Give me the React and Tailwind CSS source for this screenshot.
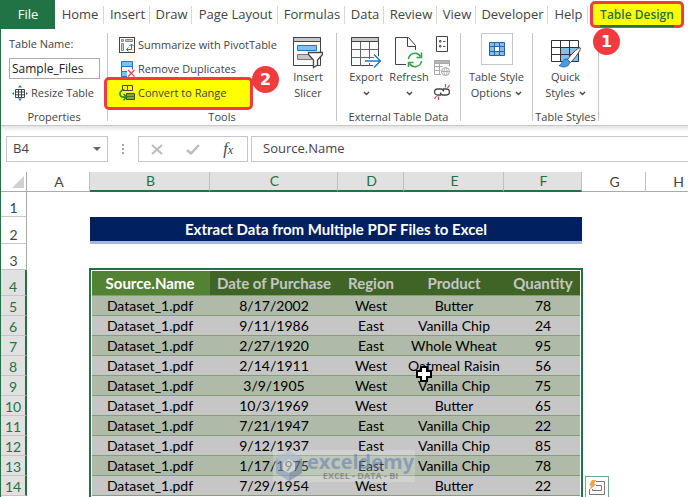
import React, { useState } from 'react';

const tabs = [
    { name: 'Home', width: 'w-[49px]' },
    { name: 'Insert', width: 'w-[46px]' },
    { name: 'Draw', width: 'w-[42px]' },
    { name: 'Page Layout', width: 'w-[86px]' },
    { name: 'Formulas', width: 'w-[67px]' },
    { name: 'Data', width: 'w-[39px]' },
    { name: 'Review', width: 'w-[53px]' },
    { name: 'View', width: 'w-[39px]' },
    { name: 'Developer', width: 'w-[72px]' },
    { name: 'Help', width: 'w-[40px]' },
];

const columns = [
    { name: 'A', width: 'w-[63px]' },
    { name: 'B', width: 'w-[120px]', selected: true },
    { name: 'C', width: 'w-[128px]', selected: true },
    { name: 'D', width: 'w-[66px]', selected: true },
    { name: 'E', width: 'w-[100px]', selected: true },
    { name: 'F', width: 'w-[78px]', selected: true },
    { name: 'G', width: 'w-[64px]' },
    { name: 'H', width: 'w-[64px]' },
];

const headers = ['Source.Name', 'Date of Purchase', 'Region', 'Product', 'Quantity'];

const rows = [
    ['Dataset_1.pdf', '8/17/2002', 'West', 'Butter', 78],
    ['Dataset_1.pdf', '9/11/1986', 'East', 'Vanilla Chip', 24],
    ['Dataset_1.pdf', '2/27/1920', 'East', 'Whole Wheat', 95],
    ['Dataset_1.pdf', '2/14/1911', 'West', 'Oatmeal Raisin', 56],
    ['Dataset_1.pdf', '3/9/1905', 'West', 'Vanilla Chip', 75],
    ['Dataset_1.pdf', '10/3/1969', 'West', 'Butter', 65],
    ['Dataset_1.pdf', '7/21/1947', 'East', 'Vanilla Chip', 22],
    ['Dataset_1.pdf', '9/12/1937', 'East', 'Vanilla Chip', 85],
    ['Dataset_1.pdf', '1/17/1975', 'East', 'Vanilla Chip', 78],
    ['Dataset_1.pdf', '7/29/1954', 'West', 'Butter', 22],
];

const Chevron = ({ className = '' }) => (
    <svg width="7" height="5" viewBox="0 0 7 5" className={className} fill="none" stroke="#444" strokeWidth="1.4">
        <path d="M1 1l2.5 2.5L6 1" />
    </svg>
);

const PivotIcon = () => (
    <svg width="16" height="16" viewBox="0 0 16 16" fill="none">
        <rect x="0.5" y="0.5" width="15" height="15" fill="#fff" stroke="#444" />
        <path d="M2.5 2.5h2v2h-2zM6.5 2.5h7v2h-7zM2.5 6.5h2v7h-2z" fill="#c8c8c8" stroke="#888" />
        <path d="M7.5 12.5h5V7M9.5 10.5l-2 2 2 2M10.500 9l2-2 2 2" stroke="#1979ca" />
    </svg>
);

const DuplicatesIcon = () => (
    <svg width="16" height="16" viewBox="0 0 16 16" fill="none">
        <path d="M2.500.5h11v5h-11z" fill="#83beec" stroke="#1979ca" />
        <path d="M2.500 5.500v5M13.500 5.500v3" stroke="#555" />
        <path d="M8 15.500H2.500v-5H8" fill="#83beec" stroke="#1979ca" />
        <path d="M9 9l6.500 6.500M15.500 9L9 15.500" stroke="#e04343" strokeWidth="1.200" />
    </svg>
);

const ConvertIcon = () => (
    <svg width="16" height="16" viewBox="0 0 16 16" fill="none">
        <path d="M3.500.5h10v5h-10zM8.500.5v5" stroke="#444" />
        <path d="M7.500 8.500h8v6h-8z" fill="#7fae1c" stroke="#444" />
        <path d="M8 11.500h7.500" stroke="#4d7a12" />
        <path d="M5.500 4.500C1.500 5 .5 8 1.200 10c.6 2 2.500 2.500 5.500 2M4.500 9l3 3-3 3.300" stroke="#2f8a2b" strokeWidth="1.700" />
    </svg>
);

const ResizeIcon = () => (
    <svg width="16" height="16" viewBox="0 0 16 16" fill="none">
        <path d="M3.500 4.500h9v8h-9zM3.500 7h9M3.500 9.800h9M6.500 4.500v8M9.500 4.500v8" stroke="#444" />
        <path d="M8 0l2 2.500H6zM8 16l2-2.500H6zM0 8.500L2 7v3zM16 8.500L14 7v3z" fill="#1979ca" />
    </svg>
);

const SlicerIcon = () => (
    <svg width="30" height="32" viewBox="0 0 30 32" fill="none">
        <path d="M.5.5h27v28H.5z" fill="#fafafa" stroke="#444" />
        <path d="M.5.5h27v4H.5z" fill="#c8c8c8" stroke="#444" />
        <path d="M4.500 8.500h19v5h-19z" fill="#83beec" stroke="#1979ca" />
        <path d="M4.500 17.500h14v5h-14z" fill="#c8c8c8" stroke="#777" />
        <path d="M15.500 15.500h14v2l-5 5.500v5l-4 2.500V23l-5-5.500z" fill="#fff" stroke="#444" strokeWidth="1.300" />
    </svg>
);

const ExportIcon = () => (
    <svg width="30" height="32" viewBox="0 0 30 32" fill="none">
        <path d="M.5.5h27v28H.5z" fill="#fafafa" stroke="#444" />
        <path d="M.5 12.500h27M.5 20.500h27M9.500 4.500v24M18.500 4.500v24" stroke="#666" />
        <path d="M.5.5h27v4H.5z" fill="#c8c8c8" stroke="#444" />
        <path d="M14 24h15M23 17.500l6.500 6.500-6.500 6.500" stroke="#fff" strokeWidth="4" />
        <path d="M14 24h15M23 17.500l6.500 6.500-6.500 6.500" stroke="#1979ca" strokeWidth="1.500" />
    </svg>
);

const RefreshIcon = () => (
    <svg width="30" height="32" viewBox="0 0 30 32" fill="none">
        <path d="M12 27.500H1.500V.5h13l7 8V13" fill="#fafafa" stroke="#444" />
        <path d="M13.500.5v9h8" stroke="#444" />
        <path d="M14.500 22a6.500 6.500 0 0 1 12-2.500M27.500 24a6.500 6.500 0 0 1-12 2.500" stroke="#33a04a" strokeWidth="1.500" />
        <path d="M27.500 15.500v5h-5M14.500 30v-4.500h5" stroke="#33a04a" strokeWidth="1.500" />
    </svg>
);

const PropertiesIcon = () => (
    <svg width="16" height="16" viewBox="0 0 16 16" fill="none">
        <path d="M2.500.5h11v15h-11z" fill="#fff" stroke="#444" />
        <path d="M5.500 4.500h1.500v1.500h-1.500zM5.500 9.500h1.500v1.500h-1.500zM9 5.500h2.500M9 10.500h2.500" stroke="#555" />
    </svg>
);

const BrowserIcon = () => (
    <svg width="16" height="16" viewBox="0 0 16 16" fill="none" stroke="#a9a9a9">
        <path d="M7 14.500H.5V.5h15v6M.5 6.500h8M.5 10.500h6M5.500 3.500v11" />
        <path d="M.5.5h15v3H.5z" fill="#b5b5b5" />
        <circle cx="11.500" cy="11.500" r="4" fill="#fff" />
        <path d="M7.500 11.500h8M11.500 7.500c-2 2.500-2 5.500 0 8c2-2.500 2-5.500 0-8z" />
    </svg>
);

const UnlinkIcon = () => (
    <svg width="16" height="16" viewBox="0 0 16 16" fill="none">
        <path d="M7 11H3.500a3 3 0 0 1 0-6H7a2.500 2.500 0 0 1 2.500 2.500M9 5h3.500a3 3 0 0 1 0 6H9a2.500 2.500 0 0 1-2.500-2.500" stroke="#444" strokeWidth="1.300" />
        <path d="M11.500 3.500V0M13.500 4l2-3M4.500 12.500V16M2.500 12l-2 3" stroke="#e04343" strokeWidth="1.200" />
    </svg>
);

const StyleOptionsIcon = () => (
    <svg width="16" height="14" viewBox="0 0 16 14" fill="none">
        <path d="M.5.5h15v13H.5z" fill="#83beec" />
        <path d="M5.500 4.500h5v5h-5z" fill="#fff" />
        <path d="M.5.5h15v13H.5zM.5 4.500h15M.5 9.500h15M5.500.5v13M10.500.5v13" stroke="#2b6494" />
    </svg>
);

const QuickStylesIcon = () => (
    <svg width="30" height="32" viewBox="0 0 30 32" fill="none">
        <path d="M.5 3.500h27v21H.5z" fill="#fff" />
        <path d="M9.500 10.500h18v14h-18z" fill="#83beec" />
        <path d="M.5 3.500h27v21H.5zM.5 10.500h27M.5 17.500h27M9.500 3.500v21M18.500 3.500v21" stroke="#333" />
        <path d="M29 10.500c-3 1-9 7-12.500 12l3 3C24 21 29.500 14 29.500 11z" fill="#fff" stroke="#444" />
        <path d="M8 28.500c3-.5 2.500-5.500 7-6.500 3 .5 4.500 3 3 5.500-2.500 3-7 3-10 1z" fill="#4a9be0" stroke="#1f6cb0" />
    </svg>
);

const SmallButton = ({ icon, children }) => (
    <button type="button" className="flex h-6 items-center gap-[3px] whitespace-nowrap">
        {icon}
        <span>{children}</span>
    </button>
);

const BigButton = ({ icon, children, className = '' }) => (
    <button type="button" className={`flex flex-col items-center pt-2 leading-4 whitespace-nowrap ${className}`}>
        {icon}
        {children}
    </button>
);

const Group = ({ title, className, children }) => (
    <section className={`flex shrink-0 flex-col justify-between ${className}`}>
        <div className="flex">{children}</div>
        <h2 className="text-center leading-4 whitespace-nowrap">{title}</h2>
    </section>
);

const Divider = () => <div className="my-1 w-px shrink-0 bg-[#c6c6c6]" />;

const Callout = ({ children, className }) => (
    <span className={`absolute z-20 flex size-[27px] items-center justify-center rounded-full bg-[#f23b3f] font-['DejaVu_Sans',sans-serif] text-base font-bold text-white ${className}`}>
        {children}
    </span>
);

const Ribbon = () => {
    const [tableName, setTableName] = useState('Sample_Files');

    return (
        <div className="relative flex h-24 text-[11px]">
            <Group title="Properties" className="w-[106px]">
                <div className="flex flex-col gap-0.5 pt-[3px] pl-2">
                    <label htmlFor="table-name" className="h-6 leading-6">Table Name:</label>
                    <input
                        id="table-name"
                        value={tableName}
                        onChange={(e) => setTableName(e.target.value)}
                        className="h-[21px] w-[91px] border border-[#ababab] bg-white pl-0.5 text-xs text-[#222]"
                    />
                    <div className="pl-[3px]"><SmallButton icon={<ResizeIcon />}>Resize Table</SmallButton></div>
                </div>
            </Group>
            <Divider />
            <Group title="Tools" className="w-[228px]">
                <div className="flex w-[178px] flex-col items-start pt-1 pl-[11px]">
                    <SmallButton icon={<PivotIcon />}>Summarize with PivotTable</SmallButton>
                    <SmallButton icon={<DuplicatesIcon />}>Remove Duplicates</SmallButton>
                    <div className="relative z-10">
                        <span className="absolute -top-1 -left-[15px] h-[33px] w-[149px] rounded-[5px] border-3 border-[#f23b3f] bg-[#ffff00]" />
                        <div className="relative"><SmallButton icon={<ConvertIcon />}>Convert to Range</SmallButton></div>
                        <Callout className="-top-[15px] left-[133px]">2</Callout>
                    </div>
                </div>
                <BigButton icon={<SlicerIcon />} className="w-11">
                    <span>Insert</span>
                    <span>Slicer</span>
                </BigButton>
            </Group>
            <Divider />
            <Group title="External Table Data" className="w-[123px]">
                <BigButton icon={<ExportIcon />} className="w-[58px]">
                    <span>Export</span>
                    <Chevron className="mt-1.5" />
                </BigButton>
                <BigButton icon={<RefreshIcon />} className="w-7">
                    <span>Refresh</span>
                    <Chevron className="mt-1.5" />
                </BigButton>
                <div className="flex flex-col gap-2 pt-[7px] pl-[11px]">
                    <button type="button" aria-label="Properties"><PropertiesIcon /></button>
                    <button type="button" aria-label="Open in Browser"><BrowserIcon /></button>
                    <button type="button" aria-label="Unlink"><UnlinkIcon /></button>
                </div>
            </Group>
            <Divider />
            <div className="w-[71px] shrink-0">
                <button type="button" className="flex w-full flex-col items-center pt-1 leading-4 whitespace-nowrap">
                    <span className="mb-1 flex size-8 items-center justify-center border border-[#c6c6c6]"><StyleOptionsIcon /></span>
                    <span>Table Style</span>
                    <span className="flex items-center gap-1">Options <Chevron /></span>
                </button>
            </div>
            <Divider />
            <Group title="Table Styles" className="w-[65px]">
                <BigButton icon={<QuickStylesIcon />} className="w-full">
                    <span>Quick</span>
                    <span className="flex items-center gap-1">Styles <Chevron /></span>
                </BigButton>
            </Group>
            <Divider />
        </div>
    );
};

const FormulaBar = () => (
    <div className="flex h-[26px] text-[13px]">
        <button type="button" className="ml-[5px] flex w-[102px] items-center justify-between border border-[#c6c6c6] px-1.5">
            B4
            <svg width="8" height="4" viewBox="0 0 8 4"><path d="M0 0h8L4 4z" fill="#666" /></svg>
        </button>
        <div className="flex w-[30px] items-center justify-center">
            <svg width="2" height="10" viewBox="0 0 2 10" fill="#a6a6a6"><path d="M0 0h2v2H0zM0 4h2v2H0zM0 8h2v2H0z" /></svg>
        </div>
        <div className="flex w-[110px] items-center justify-between border border-[#c6c6c6] px-3">
            <button type="button" aria-label="Cancel">
                <svg width="12" height="11" viewBox="0 0 12 11" stroke="#bdbdbd" strokeWidth="2"><path d="M1 1l10 9M11 1L1 10" /></svg>
            </button>
            <button type="button" aria-label="Enter">
                <svg width="14" height="11" viewBox="0 0 14 11" fill="none" stroke="#bdbdbd" strokeWidth="2.500"><path d="M1 6l4 3.500L13 1" /></svg>
            </button>
            <button type="button" className="pr-0.5 font-['Liberation_Serif',serif] text-base text-[#444] italic">
                f<span className="text-xs">x</span>
            </button>
        </div>
        <input
            aria-label="Formula"
            defaultValue="Source.Name"
            className="ml-[3px] min-w-0 flex-1 border border-r-0 border-[#c6c6c6] pl-[11px]"
        />
    </div>
);

const RowNumber = ({ children, selected }) => (
    <th
        scope="row"
        className={`border-b border-b-[#c6c6c6] p-0 text-center align-bottom font-normal ${
            selected ? 'border-r-2 border-r-[#217346] bg-[#e1e1e1] text-[#217346]' : 'border-r border-r-[#ababab] text-[#444]'
        }`}
    >
        {children}
    </th>
);

const Watermark = () => (
    <div className="pointer-events-none absolute top-[278px] left-[272px] flex h-8 w-[142px] items-center bg-white/20 pl-0.5">
        <svg width="28" height="30" viewBox="0 0 28 30" opacity="0.5">
            <path d="M14 0l13 7v15l-13 8L1 22V7z" fill="#8097c4" />
            <path d="M14 0l13 7-13 8L1 7z" fill="#a9b9d8" />
            <path d="M14 15l13-8v15l-13 8z" fill="#5f7396" />
            <path d="M14 8l6 4v7l-6 3-6-3v-7z" fill="#dfe5ef" />
        </svg>
        <div className="ml-1 flex flex-col items-center font-['Open_Sans',sans-serif] font-bold">
            <span className="text-[20px] leading-5 text-[#5471b5]/50">exceldemy</span>
            <span className="text-[9px] leading-2 text-[#555]/50">EXCEL - DATA - BI</span>
        </div>
    </div>
);

const Sheet = () => (
    <div className="relative mt-[10px] font-[Lato,sans-serif] text-sm leading-4 text-black">
        <table className="w-full table-fixed border-separate border-spacing-0">
            <colgroup>
                <col className="w-[26px]" />
                {columns.map((col) => <col key={col.name} className={col.width} />)}
                <col />
            </colgroup>
            <thead>
                <tr className="h-5">
                    <th className="border-r border-b border-[#ababab] p-0">
                        <svg width="12" height="12" viewBox="0 0 12 12" className="mr-0.5 ml-auto"><path d="M12 0v12H0z" fill="#d0d0d0" /></svg>
                    </th>
                    {columns.map((col) => (
                        <th
                            key={col.name}
                            scope="col"
                            className={`border-r border-r-[#c0c0c0] p-0 pl-0.5 font-normal ${
                                col.selected ? 'border-b-2 border-b-[#217346] bg-[#e1e1e1] text-[#217346]' : 'border-b border-b-[#ababab] text-[#444]'
                            }`}
                        >
                            {col.name}
                        </th>
                    ))}
                </tr>
            </thead>
            <tbody>
                <tr className="h-[25px]"><RowNumber>1</RowNumber></tr>
                <tr className="h-[27px]">
                    <RowNumber>2</RowNumber>
                    <td />
                    <td colSpan={5} className="border-b-3 border-[#a5b8e0] bg-[#002060] p-0 text-center text-[15px] font-bold text-white">
                        Extract Data from Multiple PDF Files to Excel
                    </td>
                </tr>
                <tr className="h-[26px]"><RowNumber>3</RowNumber></tr>
                <tr className="h-[26px]">
                    <RowNumber selected>4</RowNumber>
                    <td />
                    {headers.map((header, i) => (
                        <th
                            key={header}
                            scope="col"
                            className={`border-b border-[#7fa270] p-0 text-[15px] whitespace-nowrap ${i === 0 ? 'bg-[#548235] text-white' : 'bg-[#406426] text-[#c6c6c6]'}`}
                        >
                            {header}
                        </th>
                    ))}
                </tr>
                {rows.map((row, i) => (
                    <tr key={i} className="h-5">
                        <RowNumber selected>{i + 5}</RowNumber>
                        <td />
                        {row.map((cell, j) => (
                            <td
                                key={j}
                                className={`border-b border-[#7fa270] p-0 text-center whitespace-nowrap ${i % 2 === 0 ? 'bg-[#afbaa8]' : 'bg-[#c6c6c6]'}`}
                            >
                                {cell}
                            </td>
                        ))}
                    </tr>
                ))}
            </tbody>
        </table>
        {/* selection frame around the table range */}
        <div className="pointer-events-none absolute top-24 -bottom-1 left-[88px] w-[494px] border-2 border-[#217346]">
            <div className="h-full border border-white" />
        </div>
        <Watermark />
        <svg width="16" height="16" viewBox="0 0 16 16" className="absolute top-[194px] left-[415px]">
            <path d="M5 1h6v4h4v6h-4v4H5v-4H1V5h4z" fill="#fff" stroke="#000" strokeWidth="2" />
        </svg>
        <button
            type="button"
            aria-label="Quick Analysis"
            className="absolute top-[304px] left-[584px] flex size-6 items-center justify-center border border-[#6fab8b] bg-white"
        >
            <svg width="18" height="16" viewBox="0 0 18 16" fill="none" stroke="#777">
                <path d="M8 1.500h8.500v13H1.500V9M8 5.500h5.500v5H4.500V9" />
                <path d="M4 0h4L6 4h2.500L1.500 10l1.500-4.500H1z" fill="#f2a14e" stroke="none" />
            </svg>
        </button>
    </div>
);

const App = () => (
    <div className="h-screen overflow-hidden border-l border-[#217346] bg-white font-['Open_Sans',sans-serif] text-[#444]">
        <nav className="relative flex h-[29px] text-[13px]">
            <button type="button" className="w-[54px] shrink-0 bg-[#217346] text-white">File</button>
            {tabs.map((tab) => (
                <div key={tab.name} className={`flex shrink-0 items-center ${tab.width}`}>
                    <button type="button" className="flex-1 pl-0.5 text-center whitespace-nowrap">{tab.name}</button>
                    <span className="h-[18px] w-px bg-[#d8d8d8]" />
                </div>
            ))}
            <div className="relative ml-0.5 shrink-0">
                <button type="button" className="mt-px h-[27px] w-[94px] rounded-[5px] border-3 border-[#f23b3f] bg-[#ffff00] text-xs font-semibold whitespace-nowrap text-[#217346]">
                    <span className="border-b-2 border-[#217346] pb-0.5">Table Design</span>
                </button>
                <Callout className="top-7 left-[3px]">1</Callout>
            </div>
        </nav>
        <Ribbon />
        <div className="h-[11px] border-t border-[#c8c8c8] bg-linear-to-b from-[#e4e4e4] to-white to-60%" />
        <FormulaBar />
        <Sheet />
    </div>
);

export default App;
